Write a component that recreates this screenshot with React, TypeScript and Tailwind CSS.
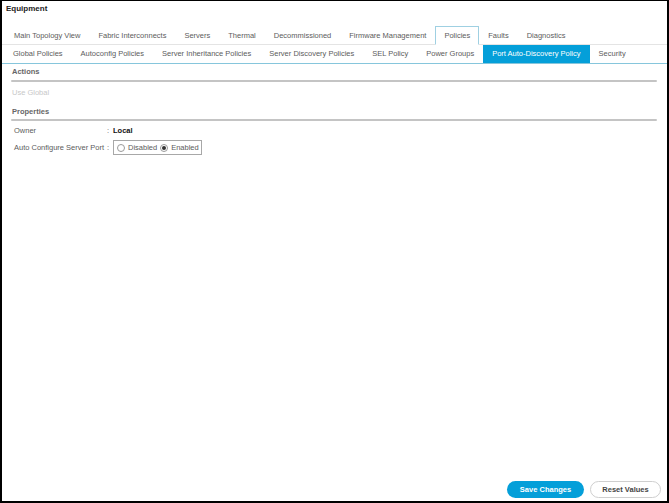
const topTabs = [
  "Main Topology View",
  "Fabric Interconnects",
  "Servers",
  "Thermal",
  "Decommissioned",
  "Firmware Management",
  "Policies",
  "Faults",
  "Diagnostics",
];

const policyTabs = [
  "Global Policies",
  "Autoconfig Policies",
  "Server Inheritance Policies",
  "Server Discovery Policies",
  "SEL Policy",
  "Power Groups",
  "Port Auto-Discovery Policy",
  "Security",
];

function Radio({ checked }: { checked: boolean }) {
  return (
    <span className="flex h-[8px] w-[8px] items-center justify-center rounded-full border border-[#9a9a9a] bg-white">
      {checked && <span className="h-[4px] w-[4px] rounded-full bg-[#333]" />}
    </span>
  );
}

export default function App() {
  return (
    <div className="flex h-[503px] w-[669px] flex-col border-x-2 border-b-2 border-t border-black bg-white font-['Liberation_Sans',Arial,sans-serif] text-[7.5px] text-[#5c5c5c]">
      <div className="h-[25px] pl-[4px] pt-[3px] text-[8px] font-bold leading-[10px] text-[#222]">Equipment</div>

      {/* top level tabs */}
      <div className="flex h-[19px] items-end border-b border-[#e4e4e4] pl-[3px]">
        {topTabs.map((tab) => (
          <div
            key={tab}
            className={`-mb-px flex h-[19px] items-center px-[8px] ${
              tab === "Policies" ? "border border-b-white border-[#9fd0e2] bg-white" : "border border-transparent"
            }`}
          >
            {tab}
          </div>
        ))}
      </div>

      {/* policy tabs */}
      <div className="flex h-[19px] items-stretch border-b border-[#86c6dc] pl-[2px]">
        {policyTabs.map((tab) => (
          <div
            key={tab}
            className={`flex items-center px-[9px] ${
              tab === "Port Auto-Discovery Policy" ? "bg-[#049fd9] text-white" : ""
            }`}
          >
            {tab}
          </div>
        ))}
      </div>

      <main className="flex flex-1 flex-col px-[9px] pt-[2px]">
        <h2 className="h-[12px] pl-[1px] text-[7.5px] font-bold leading-[12px] text-[#666]">Actions</h2>
        <div className="mt-[2px] mr-[1px] h-[2px] rounded-full bg-[#c4c4c4]" />
        <p className="mt-[6px] h-[10px] pl-[1px] leading-[10px] text-[#c8c8c8]">Use Global</p>

        <h2 className="mt-[9px] h-[10px] pl-[1px] text-[7.5px] font-bold leading-[10px] text-[#666]">Properties</h2>
        <div className="mt-[2px] mr-[1px] h-[2px] rounded-full bg-[#c4c4c4]" />

        <div className="mt-[5px] grid grid-cols-[93px_6px_auto] items-center pl-[3px]">
          <span className="h-[10px] leading-[10px]">Owner</span>
          <span className="leading-[10px]">:</span>
          <span className="font-bold leading-[10px] text-[#111]">Local</span>
        </div>
        <div className="mt-[4px] grid grid-cols-[93px_6px_auto] items-center pl-[3px]">
          <span className="leading-[10px]">Auto Configure Server Port</span>
          <span className="leading-[10px]">:</span>
          <div className="flex h-[15px] w-[89px] items-center gap-[3px] border border-[#a8a8a8] pl-[3px]">
            <Radio checked={false} />
            <span>Disabled</span>
            <Radio checked />
            <span>Enabled</span>
          </div>
        </div>

        <div className="-mr-[3px] mt-auto mb-[3px] flex justify-end gap-[6px]">
          <button
            type="button"
            className="h-[17px] w-[77px] rounded-full bg-[#049fd9] text-[7.5px] font-bold text-white"
          >
            Save Changes
          </button>
          <button
            type="button"
            className="h-[17px] w-[71px] rounded-full border border-[#cfcfcf] bg-white text-[7.5px] font-bold text-[#444]"
          >
            Reset Values
          </button>
        </div>
      </main>
    </div>
  );
}
